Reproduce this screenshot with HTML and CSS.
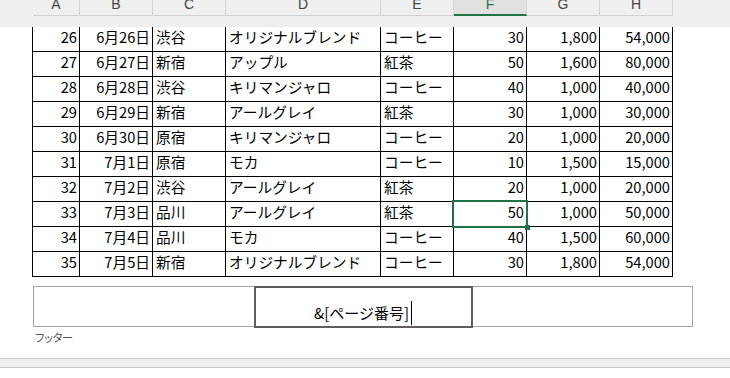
FILE: index.html
```html
<!DOCTYPE html>
<html>
<head>
<meta charset="UTF-8">
<title>ページレイアウト</title>
<link rel="stylesheet" href="styles.css">
</head>
<body>
<div class="colbar">
	<div class="corner"></div>
	<div class="ch w-a">A</div>
	<div class="ch w-b">B</div>
	<div class="ch w-c">C</div>
	<div class="ch w-d">D</div>
	<div class="ch w-e">E</div>
	<div class="ch w-f active">F</div>
	<div class="ch w-g">G</div>
	<div class="ch w-h">H</div>
</div>
<div class="topmargin"></div>
<div class="page">
<table class="sheet">
	<colgroup>
		<col class="w-a"><col class="w-b"><col class="w-c"><col class="w-d">
		<col class="w-e"><col class="w-f"><col class="w-g"><col class="w-h">
	</colgroup>
	<tr><td class="num">26</td><td class="num">6月26日</td><td>渋谷</td><td>オリジナルブレンド</td><td>コーヒー</td><td class="num">30</td><td class="num">1,800</td><td class="num">54,000</td></tr>
	<tr><td class="num">27</td><td class="num">6月27日</td><td>新宿</td><td>アップル</td><td>紅茶</td><td class="num">50</td><td class="num">1,600</td><td class="num">80,000</td></tr>
	<tr><td class="num">28</td><td class="num">6月28日</td><td>渋谷</td><td>キリマンジャロ</td><td>コーヒー</td><td class="num">40</td><td class="num">1,000</td><td class="num">40,000</td></tr>
	<tr><td class="num">29</td><td class="num">6月29日</td><td>新宿</td><td>アールグレイ</td><td>紅茶</td><td class="num">30</td><td class="num">1,000</td><td class="num">30,000</td></tr>
	<tr><td class="num">30</td><td class="num">6月30日</td><td>原宿</td><td>キリマンジャロ</td><td>コーヒー</td><td class="num">20</td><td class="num">1,000</td><td class="num">20,000</td></tr>
	<tr><td class="num">31</td><td class="num">7月1日</td><td>原宿</td><td>モカ</td><td>コーヒー</td><td class="num">10</td><td class="num">1,500</td><td class="num">15,000</td></tr>
	<tr><td class="num">32</td><td class="num">7月2日</td><td>渋谷</td><td>アールグレイ</td><td>紅茶</td><td class="num">20</td><td class="num">1,000</td><td class="num">20,000</td></tr>
	<tr><td class="num">33</td><td class="num">7月3日</td><td>品川</td><td>アールグレイ</td><td>紅茶</td><td class="num selected">50</td><td class="num">1,000</td><td class="num">50,000</td></tr>
	<tr><td class="num">34</td><td class="num">7月4日</td><td>品川</td><td>モカ</td><td>コーヒー</td><td class="num">40</td><td class="num">1,500</td><td class="num">60,000</td></tr>
	<tr><td class="num">35</td><td class="num">7月5日</td><td>新宿</td><td>オリジナルブレンド</td><td>コーヒー</td><td class="num">30</td><td class="num">1,800</td><td class="num">54,000</td></tr>
</table>

<div class="footer">
	<div class="fsec"></div>
	<div class="fsec editing"><span>&amp;[ページ番号]</span><span class="caret"></span></div>
	<div class="fsec"></div>
</div>
<div class="flabel">フッター</div>
</div>
<div class="hscroll"></div>
</body>
</html>
```

FILE: styles.css
```css
body{
	margin : 0;
	width : 730px;
	height : 378px;
	overflow : hidden;
	background-color : #ffffff;
	font-family : "Noto Sans CJK JP", sans-serif;
	color : #000000;
}

/* column letters */
.colbar{
	display : flex;
	height : 16px;
	background-color : #efefef;
}
.corner{
	width : 33px;
}
.ch{
	box-sizing : border-box;
	height : 16px;
	border-right : 1px solid #d4d4d4;
	border-bottom : 1px solid #d0d0d0;
	font-family : "Liberation Sans", sans-serif;
	font-size : 14px;
	line-height : 9px;
	text-align : center;
	color : #444444;
	overflow : hidden;
}
.ch.active{
	background-color : #e1e1e1;
	border-bottom : 2px solid #217346;
	color : #217346;
}
.w-a{ width : 47px; }
.w-b{ width : 73px; }
.w-c{ width : 73px; }
.w-d{ width : 155px; }
.w-e{ width : 73px; }
.w-f{ width : 73px; }
.w-g{ width : 73px; }
.w-h{ width : 73px; }

.topmargin{
	height : 11px;
	background-color : #efefef;
}

/* page */
.page{
	padding-left : 33px;
}
.sheet{
	border-collapse : collapse;
	table-layout : fixed;
	width : 641px;
	margin-left : -1px;
	font-size : 14.7px;
}
.sheet td{
	height : 19px;
	padding : 0 3px 5px 3px;
	border : 1px solid #000000;
	line-height : 18px;
	vertical-align : bottom;
	white-space : nowrap;
	overflow : hidden;
}
.sheet tr:first-child td{
	border-top : none;
}
.sheet td.num{
	text-align : right;
	padding-right : 2px;
}
.sheet td.selected{
	position : relative;
	overflow : visible;
}
.sheet td.selected::after{
	content : "";
	position : absolute;
	top : -2px;
	left : -2px;
	right : -2px;
	bottom : -2px;
	border : 2px solid #217346;
}
.sheet td.selected::before{
	content : "";
	position : absolute;
	right : -4px;
	bottom : -4px;
	width : 5px;
	height : 5px;
	background-color : #217346;
	z-index : 1;
}

/* footer */
.footer{
	display : flex;
	box-sizing : border-box;
	width : 660px;
	height : 41px;
	margin-top : 9px;
	border : 1px solid #a6a6a6;
}
.fsec{
	flex : 1;
}
.fsec.editing{
	box-sizing : border-box;
	flex : 0 0 219px;
	height : 42px;
	margin : -1px 0;
	border : 2px solid #5f5f5f;
	text-align : center;
	font-size : 15px;
	line-height : 20px;
	padding-top : 13px;
}
.caret{
	display : inline-block;
	width : 1px;
	height : 24px;
	margin-left : 2px;
	background-color : #000000;
	vertical-align : -6px;
}
.flabel{
	margin-top : 3px;
	margin-left : 2px;
	font-size : 11px;
	line-height : 15px;
	color : #505050;
	font-feature-settings : "palt";
}

.hscroll{
	box-sizing : border-box;
	height : 10px;
	margin-top : 13px;
	background-color : #efefef;
	border-top : 1px solid #c6c6c6;
	border-bottom : 1px solid #c6c6c6;
}
```
